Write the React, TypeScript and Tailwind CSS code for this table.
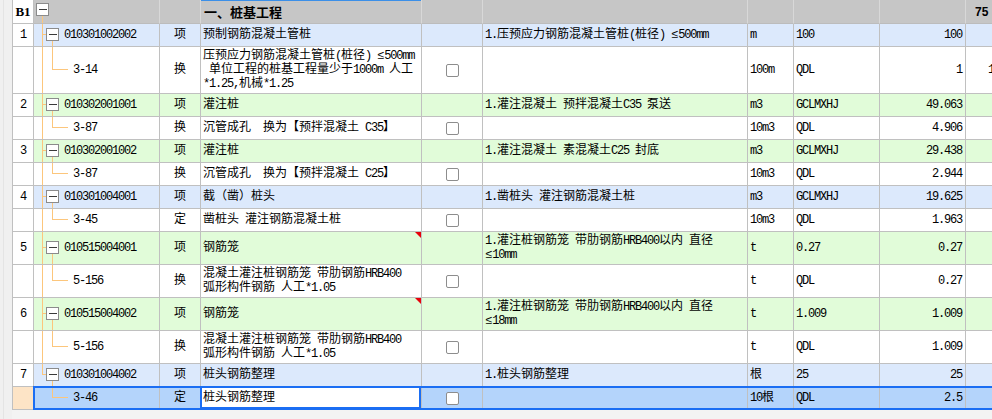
import React from "react";

const CJK_RE = /[\u2E80-\u9FFF\uFF00-\uFFEF\u3000-\u303F\u2264\u3010\u3011]/;

function Txt({ s }: { s: string }) {
  const runs: { t: string; cjk: boolean }[] = [];
  for (const ch of s) {
    const c = CJK_RE.test(ch);
    const last = runs[runs.length - 1];
    if (last && last.cjk === c) last.t += ch;
    else runs.push({ t: ch, cjk: c });
  }
  return (
    <>
      {runs.map((r, i) =>
        r.cjk ? (
          <span key={i}>{r.t}</span>
        ) : (
          <span key={i} className="tracking-[-1.2px]">
            {r.t}
          </span>
        )
      )}
    </>
  );
}

type Kind = "parent" | "lastParent" | "child" | "lastChild";
type Row = {
  kind: Kind;
  num?: string;
  code: string;
  type: string;
  name: string[];
  desc?: string[];
  unit: string;
  expr: string;
  qty: string;
  extra?: string;
  bg: string;
  h: number;
  tri?: boolean;
  sel?: boolean;
};

const BLUE = "bg-[#dce9fc]";
const GREEN = "bg-[#e1fcd9]";
const WHITE = "bg-white";
const SEL = "bg-[#b4d4fb]";

const rows: Row[] = [
  { kind: "parent", num: "1", code: "010301002002", type: "项", name: ["预制钢筋混凝土管桩"], desc: ["1.压预应力钢筋混凝土管桩(桩径) ≤500mm"], unit: "m", expr: "100", qty: "100", bg: BLUE, h: 23 },
  { kind: "child", code: "3-14", type: "换", name: ["压预应力钢筋混凝土管桩(桩径) ≤500mm", " 单位工程的桩基工程量少于1000m 人工", "*1.25,机械*1.25"], unit: "100m", expr: "QDL", qty: "1", extra: "1", bg: WHITE, h: 47 },
  { kind: "parent", num: "2", code: "010302001001", type: "项", name: ["灌注桩"], desc: ["1.灌注混凝土 预拌混凝土C35 泵送"], unit: "m3", expr: "GCLMXHJ", qty: "49.063", bg: GREEN, h: 23 },
  { kind: "child", code: "3-87", type: "换", name: ["沉管成孔  换为【预拌混凝土 C35】"], unit: "10m3", expr: "QDL", qty: "4.906", bg: WHITE, h: 23 },
  { kind: "parent", num: "3", code: "010302001002", type: "项", name: ["灌注桩"], desc: ["1.灌注混凝土 素混凝土C25 封底"], unit: "m3", expr: "GCLMXHJ", qty: "29.438", bg: GREEN, h: 23 },
  { kind: "child", code: "3-87", type: "换", name: ["沉管成孔  换为【预拌混凝土 C25】"], unit: "10m3", expr: "QDL", qty: "2.944", bg: WHITE, h: 23 },
  { kind: "parent", num: "4", code: "010301004001", type: "项", name: ["截（凿）桩头"], desc: ["1.凿桩头 灌注钢筋混凝土桩"], unit: "m3", expr: "GCLMXHJ", qty: "19.625", bg: BLUE, h: 23 },
  { kind: "child", code: "3-45", type: "定", name: ["凿桩头 灌注钢筋混凝土桩"], unit: "10m3", expr: "QDL", qty: "1.963", bg: WHITE, h: 23 },
  { kind: "parent", num: "5", code: "010515004001", type: "项", name: ["钢筋笼"], desc: ["1.灌注桩钢筋笼 带肋钢筋HRB400以内 直径", "≤10mm"], unit: "t", expr: "0.27", qty: "0.27", bg: GREEN, h: 33, tri: true },
  { kind: "child", code: "5-156", type: "换", name: ["混凝土灌注桩钢筋笼 带肋钢筋HRB400", "弧形构件钢筋 人工*1.05"], unit: "t", expr: "QDL", qty: "0.27", bg: WHITE, h: 33 },
  { kind: "parent", num: "6", code: "010515004002", type: "项", name: ["钢筋笼"], desc: ["1.灌注桩钢筋笼 带肋钢筋HRB400以内 直径", "≤18mm"], unit: "t", expr: "1.009", qty: "1.009", bg: GREEN, h: 33, tri: true },
  { kind: "child", code: "5-156", type: "换", name: ["混凝土灌注桩钢筋笼 带肋钢筋HRB400", "弧形构件钢筋 人工*1.05"], unit: "t", expr: "QDL", qty: "1.009", bg: WHITE, h: 33 },
  { kind: "lastParent", num: "7", code: "010301004002", type: "项", name: ["桩头钢筋整理"], desc: ["1.桩头钢筋整理"], unit: "根", expr: "25", qty: "25", bg: BLUE, h: 23 },
  { kind: "lastChild", code: "3-46", type: "定", name: ["桩头钢筋整理"], unit: "10根", expr: "QDL", qty: "2.5", bg: SEL, h: 23, sel: true },
];

const LINE = "#fcc67c";
const BOXC = "#8b8b8b";

function TreeSvg({ kind, ch }: { kind: Kind; ch: number }) {
  const mid = Math.floor(ch / 2) - 0.5;
  if (kind === "parent" || kind === "lastParent") {
    return (
      <svg width={30} height={ch} className="shrink-0" shapeRendering="crispEdges">
        <line x1={8.5} y1={0} x2={8.5} y2={kind === "parent" ? ch : mid} stroke={LINE} />
        <line x1={8.5} y1={mid} x2={12} y2={mid} stroke={LINE} />
        <line x1={18.5} y1={mid + 6} x2={18.5} y2={ch} stroke={LINE} />
        <rect x={12.5} y={mid - 6} width={12} height={12} fill="#fff" stroke={BOXC} />
        <line x1={15} y1={mid} x2={23} y2={mid} stroke="#3a3a3a" />
      </svg>
    );
  }
  return (
    <svg width={39} height={ch} className="shrink-0" shapeRendering="crispEdges">
      {kind === "child" && <line x1={8.5} y1={0} x2={8.5} y2={ch} stroke={LINE} />}
      <line x1={18.5} y1={0} x2={18.5} y2={mid} stroke={LINE} />
      <line x1={18.5} y1={mid} x2={34} y2={mid} stroke={LINE} />
    </svg>
  );
}

const cell = "shrink-0 border-r border-b border-[#c0c0c0] flex items-center";

function Checkbox() {
  return <div className="w-[13px] h-[13px] border border-[#8d8d8d] rounded-[2px] bg-white" />;
}

function Lines({ lines }: { lines: string[] }) {
  return (
    <div className="flex flex-col">
      {lines.map((l, i) => (
        <div key={i} className="whitespace-pre">
          <Txt s={l} />
        </div>
      ))}
    </div>
  );
}

function DataRow({ r }: { r: Row }) {
  const isParent = r.kind === "parent" || r.kind === "lastParent";
  const ch = r.h - 1;
  return (
    <div className="relative flex" style={{ height: r.h }}>
      <div className={`${cell} w-[22px] border-l justify-center ${r.sel ? "bg-[#fde4c6]" : "bg-white"}`}>
        {r.num && <Txt s={r.num} />}
      </div>
      <div className={`${cell} w-[126px] items-start ${r.bg}`}>
        <TreeSvg kind={r.kind} ch={ch} />
        <div className="self-center whitespace-pre">
          <Txt s={r.code} />
        </div>
      </div>
      <div className={`${cell} w-[41px] justify-center ${r.bg}`}>
        <Txt s={r.type} />
      </div>
      <div className={`${cell} relative w-[221px] pl-[2px] ${r.sel ? "bg-white" : r.bg}`}>
        <Lines lines={r.name} />
        {r.tri && (
          <div className="absolute top-0 right-0 w-0 h-0 border-t-[6px] border-t-[#e8000b] border-l-[6px] border-l-transparent" />
        )}
        {r.sel && <div className="absolute -left-px -top-px right-0 bottom-0 border-2 border-[#1b6ef3] pointer-events-none" />}
      </div>
      <div className={`${cell} w-[61px] justify-center ${r.bg}`}>{!isParent && <Checkbox />}</div>
      <div className={`${cell} w-[265px] pl-[2px] ${r.bg}`}>{r.desc && <Lines lines={r.desc} />}</div>
      <div className={`${cell} w-[46px] pl-[2px] ${r.bg}`}>
        <Txt s={r.unit} />
      </div>
      <div className={`${cell} w-[86px] pl-[2px] ${r.bg}`}>
        <Txt s={r.expr} />
      </div>
      <div className={`${cell} w-[86px] justify-end pr-[3px] ${r.bg}`}>
        <Txt s={r.qty} />
      </div>
      <div className={`${cell} w-[120px] pl-[22px] ${r.bg}`}>{r.extra && <Txt s={r.extra} />}</div>
      {r.sel && (
        <div className="absolute left-[21px] -top-px right-0 bottom-0 border-2 border-[#1b6ef3] pointer-events-none" />
      )}
    </div>
  );
}

function HeaderRow() {
  const hc = "shrink-0 border-r border-b border-r-[#d8d8d8] border-b-[#bcbcbc] flex items-center bg-[#c6c6c6]";
  return (
    <div className="flex h-[24px]">
      <div className="shrink-0 w-[22px] border-l border-r border-b border-[#c0c0c0] bg-white flex items-center justify-center font-['Liberation_Serif',serif] font-bold text-[13px] text-black">
        B1
      </div>
      <div className={`${hc} w-[126px] items-start`}>
        <svg width={30} height={23} shapeRendering="crispEdges">
          <line x1={8.5} y1={16} x2={8.5} y2={23} stroke={LINE} />
          <rect x={2.5} y={3.5} width={12} height={12} fill="#fff" stroke={BOXC} />
          <line x1={5} y1={9.5} x2={13} y2={9.5} stroke="#3a3a3a" />
        </svg>
      </div>
      <div className={`${hc} w-[41px]`} />
      <div className={`${hc} w-[221px] pl-[3px] shadow-[inset_0_1px_0_#3b8fe8] font-['Noto_Sans_CJK_SC',sans-serif] font-bold text-[13px]`}>
        一、桩基工程
      </div>
      <div className={`${hc} w-[61px]`} />
      <div className={`${hc} w-[265px]`} />
      <div className={`${hc} w-[46px]`} />
      <div className={`${hc} w-[86px]`} />
      <div className={`${hc} w-[86px]`} />
      <div className={`${hc} w-[120px] pl-[9px] font-['Liberation_Sans',sans-serif] font-bold text-[12px]`}>75</div>
    </div>
  );
}

export default function App() {
  return (
    <div className="w-[992px] h-[419px] overflow-hidden bg-[#f3f3f3] flex text-[12px] leading-[14px] text-black font-['Liberation_Mono','Noto_Sans_CJK_SC',monospace]">
      <div className="w-[12px] shrink-0 bg-[#f0f0f0] flex">
        <div className="ml-[3px] w-px bg-[#e4e4e4]" />
      </div>
      <div className="flex-1 min-w-0 overflow-hidden flex flex-col">
        <div className="w-[1100px] flex flex-col">
          <HeaderRow />
          {rows.map((r, i) => (
            <DataRow key={i} r={r} />
          ))}
        </div>
      </div>
    </div>
  );
}
